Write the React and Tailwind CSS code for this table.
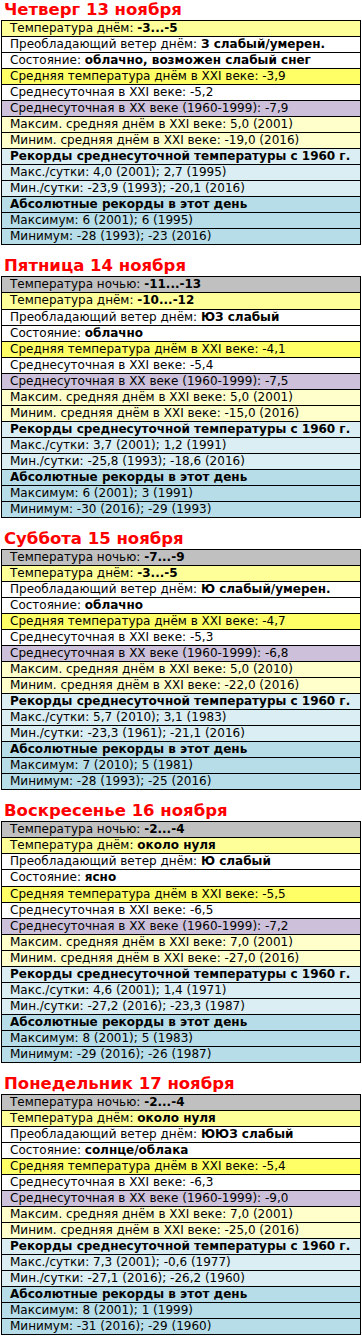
import React from "react";

const BG = {
  g: "bg-[#c0c0c0]",
  ly: "bg-[#ffff99]",
  w: "bg-white",
  y: "bg-[#ffff66]",
  p: "bg-[#ccc0da]",
  c: "bg-[#ffffcc]",
  lb: "bg-[#daeef3]",
  b: "bg-[#b7dde8]",
};

function day(title, night, dayT, wind, state, avg, d21, d20, mx, mn, rMax, rMin, aMax, aMin) {
  const rows = [];
  if (night) rows.push({ bg: "g", label: "Температура ночью: ", bold: night });
  rows.push({ bg: "ly", label: "Температура днём: ", bold: dayT });
  rows.push({ bg: "w", label: "Преобладающий ветер днём: ", bold: wind });
  rows.push({ bg: "w", label: "Состояние: ", bold: state });
  rows.push({ bg: "y", label: "Средняя температура днём в XXI веке: " + avg });
  rows.push({ bg: "w", label: "Среднесуточная в XXI веке: " + d21 });
  rows.push({ bg: "p", label: "Среднесуточная в XX веке (1960-1999): " + d20 });
  rows.push({ bg: "c", label: "Максим. средняя днём в XXI веке: " + mx });
  rows.push({ bg: "c", label: "Миним. средняя днём в XXI веке: " + mn });
  rows.push({ bg: "lb", bold: "Рекорды среднесуточной температуры с 1960 г." });
  rows.push({ bg: "lb", label: "Макс./сутки: " + rMax });
  rows.push({ bg: "lb", label: "Мин./сутки: " + rMin });
  rows.push({ bg: "b", bold: "Абсолютные рекорды в этот день" });
  rows.push({ bg: "b", label: "Максимум: " + aMax });
  rows.push({ bg: "b", label: "Минимум: " + aMin });
  return { title, rows };
}

const DAYS = [
  day("Четверг 13 ноября", null, "-3...-5", "З слабый/умерен.", "облачно, возможен слабый снег", "-3,9", "-5,2", "-7,9", "5,0 (2001)", "-19,0 (2016)", "4,0 (2001); 2,7 (1995)", "-23,9 (1993); -20,1 (2016)", "6 (2001); 6 (1995)", "-28 (1993); -23 (2016)"),
  day("Пятница 14 ноября", "-11...-13", "-10...-12", "ЮЗ слабый", "облачно", "-4,1", "-5,4", "-7,5", "5,0 (2001)", "-15,0 (2016)", "3,7 (2001); 1,2 (1991)", "-25,8 (1993); -18,6 (2016)", "6 (2001); 3 (1991)", "-30 (2016); -29 (1993)"),
  day("Суббота 15 ноября", "-7...-9", "-3...-5", "Ю слабый/умерен.", "облачно", "-4,7", "-5,3", "-6,8", "5,0 (2010)", "-22,0 (2016)", "5,7 (2010); 3,1 (1983)", "-23,3 (1961); -21,1 (2016)", "7 (2010); 5 (1981)", "-28 (1993); -25 (2016)"),
  day("Воскресенье 16 ноября", "-2...-4", "около нуля", "Ю слабый", "ясно", "-5,5", "-6,5", "-7,2", "7,0 (2001)", "-27,0 (2016)", "4,6 (2001); 1,4 (1971)", "-27,2 (2016); -23,3 (1987)", "8 (2001); 5 (1983)", "-29 (2016); -26 (1987)"),
  day("Понедельник 17 ноября", "-2...-4", "около нуля", "ЮЮЗ слабый", "солнце/облака", "-5,4", "-6,3", "-9,0", "7,0 (2001)", "-25,0 (2016)", "7,3 (2001); -0,6 (1977)", "-27,1 (2016); -26,2 (1960)", "8 (2001); 1 (1999)", "-31 (2016); -29 (1960)"),
];

export default function App() {
  return (
    <div className="w-[362px] bg-white text-black">
      <div className="flex flex-col gap-[11px] font-['DejaVu_Sans',sans-serif]">
        {DAYS.map((d) => (
          <div key={d.title}>
            <div className="h-[20px] pl-[4px] text-[16.5px] leading-[20px] font-bold text-[#ff0000] whitespace-nowrap">
              {d.title}
            </div>
            <div className="ml-[1px] w-[360px] border-t border-l border-r border-black">
              {d.rows.map((r, i) => (
                <div
                  key={i}
                  className={`h-[16.04px] border-b border-black pl-[8px] text-[12px] leading-[15px] whitespace-nowrap overflow-hidden ${BG[r.bg]}`}
                >
                  {r.label}
                  {r.bold && <b className="font-bold">{r.bold}</b>}
                </div>
              ))}
            </div>
          </div>
        ))}
      </div>
    </div>
  );
}
